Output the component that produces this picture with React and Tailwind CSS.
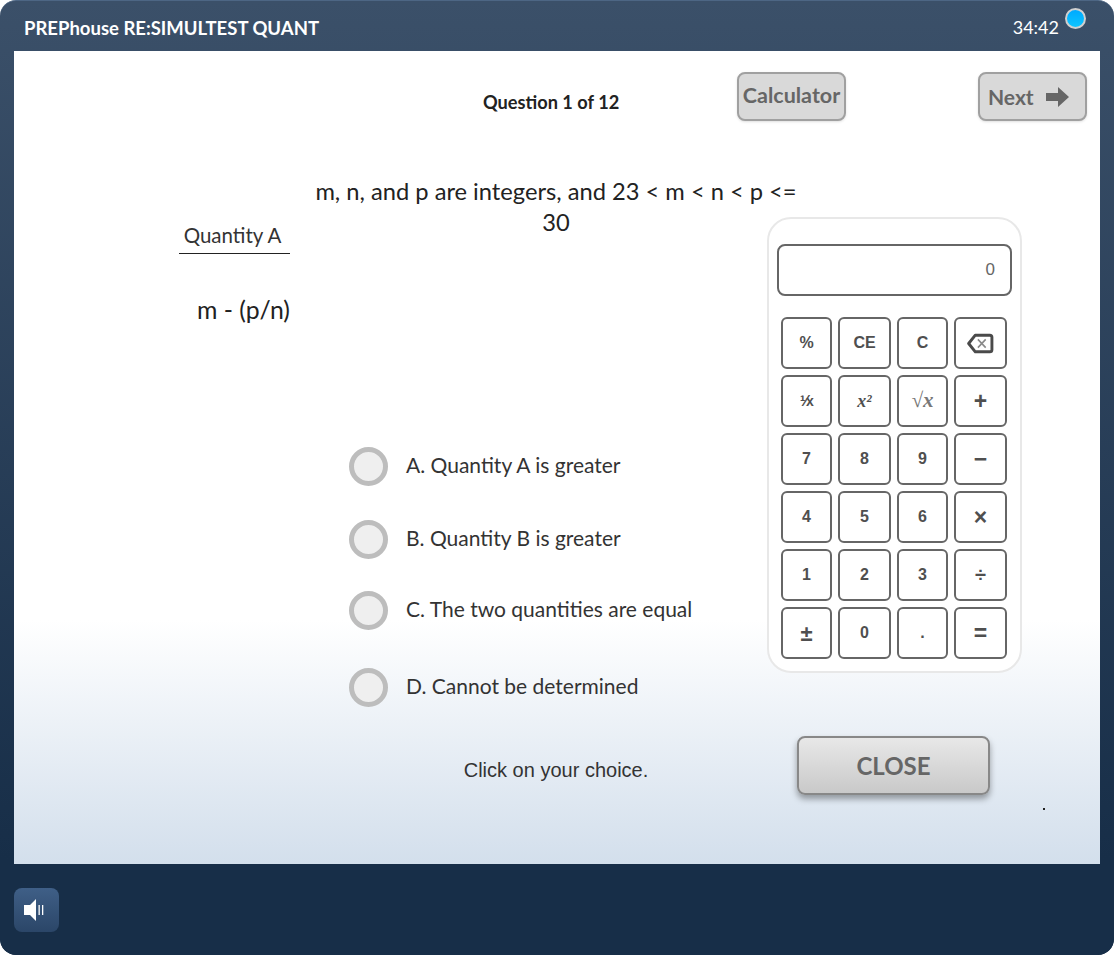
const lato = { fontFamily: '"Lato", "Open Sans", sans-serif' }

const choices = [
  { text: "A. Quantity A is greater", space: "mt-[209px]" },
  { text: "B. Quantity B is greater", space: "mt-[34px]" },
  { text: "C. The two quantities are equal", space: "mt-[32px]" },
  { text: "D. Cannot be determined", space: "mt-[38px]" },
]

function BackspaceIcon() {
  return (
    <svg width="27" height="21" viewBox="0 0 26 20" fill="none">
      <path d="M8 2h14a2 2 0 0 1 2 2v12a2 2 0 0 1-2 2H8L1.6 10z" stroke="#4a4a4a" strokeWidth="2.8" strokeLinejoin="round" />
      <path d="M10.5 6l7.5 8M18 6l-7.5 8" stroke="#8a8a8a" strokeWidth="1.5" />
    </svg>
  )
}

function SpeakerIcon() {
  return (
    <svg width="22" height="24" viewBox="0 0 22 24" fill="white">
      <path d="M1 7h6L13 1v22l-6-6H1z" />
      <rect x="15.5" y="7" width="1.3" height="10" />
      <rect x="19" y="7" width="1.3" height="10" />
    </svg>
  )
}

const keys = [
  { label: "%" },
  { label: "CE" },
  { label: "C" },
  { label: <BackspaceIcon /> },
  { label: <span className="text-[16px] tracking-[-1px]">¹∕<span className="text-[14px]">x</span></span> },
  { label: <span className="font-['Liberation_Serif'] italic text-[18px]">x²</span> },
  { label: <span className="font-['Liberation_Serif'] italic text-[#777] text-[21px]">√x</span> },
  { label: <span className="text-[23px]">+</span> },
  { label: "7" },
  { label: "8" },
  { label: "9" },
  { label: <span className="text-[23px]">−</span> },
  { label: "4" },
  { label: "5" },
  { label: "6" },
  { label: <span className="text-[23px]">×</span> },
  { label: "1" },
  { label: "2" },
  { label: "3" },
  { label: <span className="text-[20px]">÷</span> },
  { label: <span className="text-[22px]">±</span> },
  { label: "0" },
  { label: "." },
  { label: <span className="text-[23px]">=</span> },
]

function Calculator() {
  return (
    <div className="absolute left-[753px] top-[166px] w-[255px] h-[456px] bg-white border-2 border-[#e8e8e8] rounded-[24px] pt-[25px] px-[8px] font-['Liberation_Sans']">
      <div className="h-[52px] border-2 border-[#666] rounded-lg flex items-center justify-end pr-[15px] text-[17px] text-[#666]">0</div>
      <div className="mt-[21px] ml-[4px] grid grid-cols-[51px_53px_51px_53px] grid-rows-[repeat(6,52px)] gap-[6px]">
        {keys.map((key, index) => (
          <button key={index} className="flex items-center justify-center border-2 border-[#666] rounded-md bg-white text-[16px] font-bold text-[#4f4f4f]">
            {key.label}
          </button>
        ))}
      </div>
    </div>
  )
}

export default function App() {
  return (
    <div className="w-[1114px] h-[955px] flex flex-col rounded-[16px] overflow-hidden bg-linear-to-b from-[#3b5069] to-[#172e48] to-90% border-t border-[#4d6684]" style={lato}>
      <header className="h-[50px] shrink-0 flex items-start justify-between pl-[24px] pr-[28px]">
        <h1 className="text-[18.5px] font-bold text-white mt-[14px]">PREPhouse RE:SIMULTEST QUANT</h1>
        <div className="flex items-start gap-[6px] mt-[7px]">
          <span className="text-[18px] text-white mt-[6px]">34:42</span>
          <span className="w-[21px] h-[21px] rounded-full border-2 border-[#d0d0d0] bg-linear-to-b from-[#00aaff] to-[#10c4ff]"></span>
        </div>
      </header>

      <main className="relative h-[813px] shrink-0 mx-[14px] bg-linear-to-b from-white from-70% to-[#d3dfec]">
        <div className="flex pt-[21px]">
          <div className="w-[723px] pl-[469px] pt-[20px] text-[18.2px] font-bold text-[#222] leading-[20px]">Question 1 of 12</div>
          <button className="w-[109px] h-[49px] pb-[2px] rounded-lg border-2 border-[#a0a0a0] bg-[#d9d9d9] shadow-sm text-[21.5px] font-bold text-[#666]">Calculator</button>
          <button className="ml-[132px] w-[109px] h-[49px] rounded-lg border-2 border-[#a0a0a0] bg-[#d9d9d9] shadow-sm flex items-center gap-[12px] pl-[8px] text-[21px] font-bold text-[#666]">
            Next
            <svg width="23" height="20" viewBox="0 0 23 20" fill="#666">
              <path d="M0 6h12V0l11 10-11 10v-6H0z" />
            </svg>
          </button>
        </div>

        <div className="flex">
          <div className="w-[292px] shrink-0 pl-[165px] pt-[100px]">
            <div className="w-[111px] border-b border-[#222] pb-[3px] pr-[4px] text-center text-[20.5px] leading-[29px] text-[#333]">Quantity A</div>
            <div className="w-[111px] mt-[41px] text-right text-[24.8px] leading-[30px] text-[#222]">m - (p/n)</div>
          </div>
          <div className="w-[500px] shrink-0">
            <p className="pt-[55px] text-center text-[23.7px] leading-[31px] text-[#222]">m, n, and p are integers, and 23 &lt; m &lt; n &lt; p &lt;= 30</p>
            {choices.map((choice) => (
              <label key={choice.text} className={`flex items-center gap-[18px] ml-[43px] ${choice.space}`}>
                <span className="w-[39px] h-[39px] rounded-full border-[5px] border-[#bdbdbd] bg-[#efefef]"></span>
                <span className="text-[21px] text-[#333] -mt-[4px]">{choice.text}</span>
              </label>
            ))}
            <p className="mt-[49px] text-center text-[20px] leading-[28px] text-[#333] font-['Liberation_Sans']">Click on your choice.</p>
          </div>
        </div>

        <Calculator />

        <button className="absolute left-[783px] top-[685px] w-[193px] h-[59px] rounded-lg border-2 border-[#888] bg-linear-to-b from-[#e8e8e8] to-[#c9c9c9] shadow-[0_4px_6px_rgba(0,0,0,0.35)] text-[24px] font-bold text-[#666]">CLOSE</button>
        <span className="absolute left-[1029px] top-[757px] w-[2px] h-[2px] bg-[#222]"></span>
      </main>

      <footer className="flex-1 flex items-center pl-[14px] bg-[#172e48] rounded-b-[16px]">
        <button className="w-[45px] h-[44px] pr-[6px] rounded-lg bg-linear-to-b from-[#3f5f87] to-[#2b4668] flex items-center justify-center">
          <SpeakerIcon />
        </button>
      </footer>
    </div>
  )
}
